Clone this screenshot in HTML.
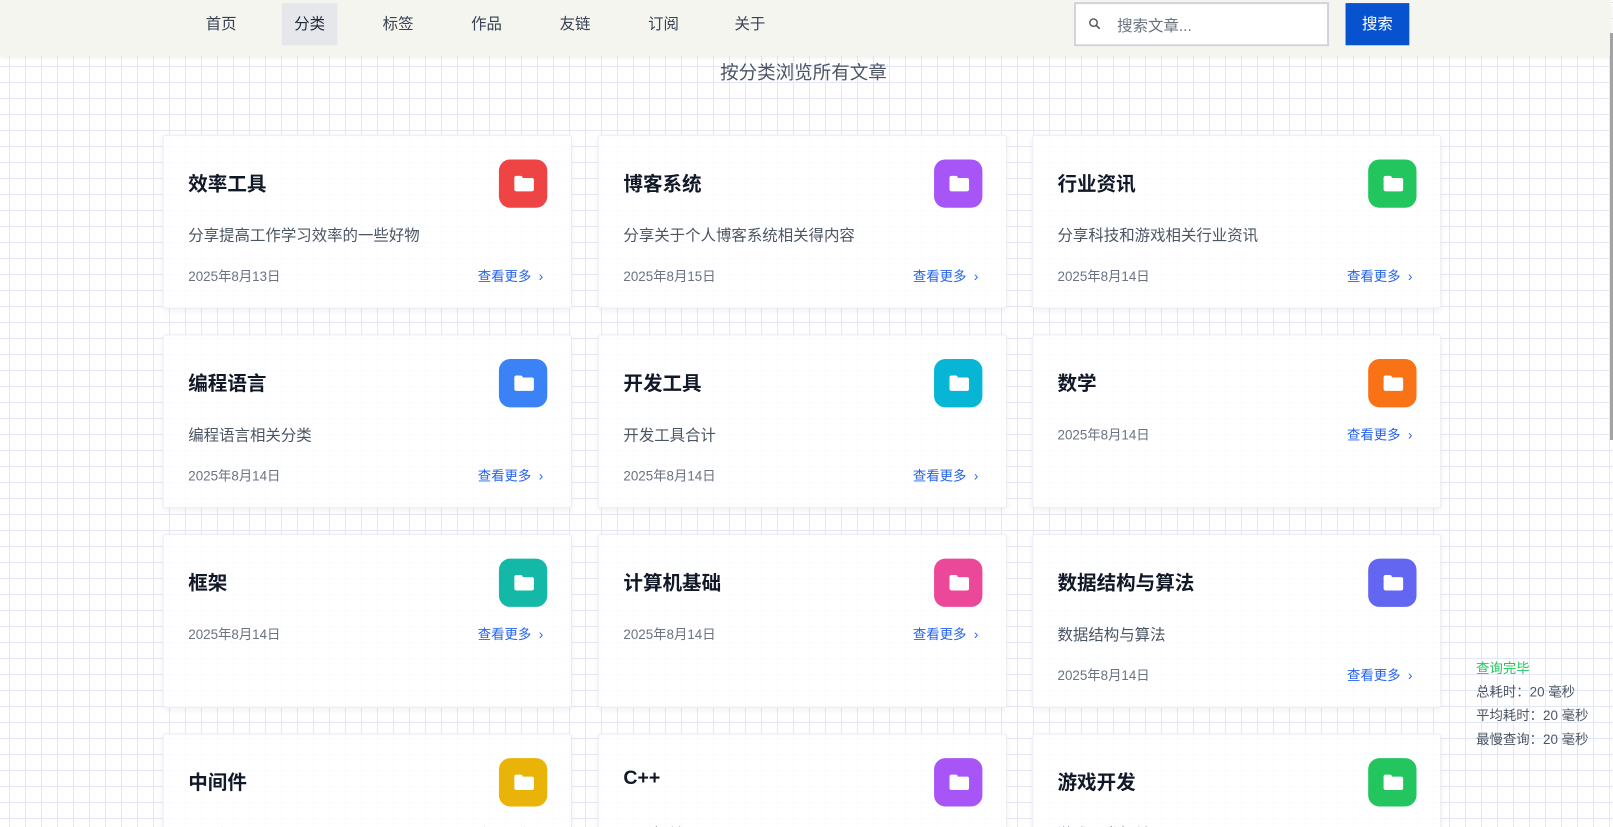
<!DOCTYPE html>
<html><head><meta charset="utf-8"><style>
*{box-sizing:border-box;margin:0;padding:0}
html,body{width:1613px;height:827px;overflow:hidden}
body{font-family:"Liberation Sans","Noto Sans CJK SC",sans-serif;background-color:#fff;
background-image:linear-gradient(#e3e6fb 1px,transparent 1px),linear-gradient(90deg,#e8e6f6 1px,transparent 1px);
background-size:16px 16px;background-position:0 2px,9px 0;position:relative}
.wrap{position:absolute;left:0;top:0;width:1568px;height:804px;overflow:hidden;transform:scale(1.0287);transform-origin:0 0}
.nav{position:absolute;left:0;top:0;width:1566px;height:54px;background:#f5f5f0;box-shadow:0 2px 4px rgba(0,0,0,.08);z-index:2}
.nav a{position:absolute;top:3px;height:41px;line-height:41px;font-size:15px;color:#374151;text-decoration:none;text-align:center;width:54px}
.nav a.on{background:#e5e7eb;color:#1f2937}
.search{position:absolute;left:1044px;top:2px;width:248px;height:43px;border:2px solid #d1d5db;background:#fff}
.search span{position:absolute;left:40px;top:10px;font-size:15px;color:#6b7280}
.btn{position:absolute;left:1308px;top:3px;width:62px;height:41px;background:#0652cf;color:#fff;font-size:15px;line-height:41px;text-align:center}
.sub{position:absolute;top:57px;left:0;width:1562px;text-align:center;font-size:18px;color:#4b5563}
.card{position:absolute;width:398px;height:169px;background:rgba(255,255,255,.85);border:1px solid #ececf2;border-radius:3px;box-shadow:0 2px 6px rgba(0,0,0,.06)}
.card h3{position:absolute;left:24px;top:32px;font-size:19px;font-weight:bold;color:#111827}
.ic{position:absolute;right:23px;top:23px;width:47px;height:47px;border-radius:11px}
.ic::before{content:"";position:absolute;left:15px;top:18px;width:19px;height:13px;background:#fff;border-radius:2px}
.ic::after{content:"";position:absolute;left:15px;top:16px;width:8px;height:4px;background:#fff;border-radius:2px 2px 0 0}
.d{position:absolute;left:24px;top:86px;font-size:15px;color:#4b5563}
.dt{position:absolute;left:24px;font-size:13px;color:#6b7280}
.m{position:absolute;right:27px;font-size:13px;color:#2563eb}
.stat{position:absolute;left:1435px;top:638px;font-size:13px;color:#4b5563;line-height:23px}
.sb{position:absolute;left:1610px;top:33px;width:3px;height:407px;background:#a3a3a3;z-index:5}
</style></head><body>
<div class="sb"></div>
<div class="wrap">
<div class="nav">
<a style="left:188px">首页</a><a class="on" style="left:274px">分类</a><a style="left:360px">标签</a><a style="left:446px">作品</a><a style="left:532px">友链</a><a style="left:618px">订阅</a><a style="left:702px">关于</a>
<div class="search"><svg style="position:absolute;left:12px;top:13px" width="13" height="13" viewBox="0 0 13 13"><circle cx="5" cy="5" r="3.6" fill="none" stroke="#555" stroke-width="1.4"/><path d="M7.7 7.7L11 11" stroke="#555" stroke-width="1.5"/></svg><span>搜索文章...</span></div>
<div class="btn">搜索</div>
</div>
<div class="sub">按分类浏览所有文章</div>

<div class="card" style="left:158px;top:131px"><h3>效率工具</h3><div class="ic" style="background:#ef4444"></div><div class="d">分享提高工作学习效率的一些好物</div><div class="dt" style="top:126px">2025年8月13日</div><div class="m" style="top:126px">查看更多 &nbsp;›</div></div>
<div class="card" style="left:581px;top:131px"><h3>博客系统</h3><div class="ic" style="background:#a855f7"></div><div class="d">分享关于个人博客系统相关得内容</div><div class="dt" style="top:126px">2025年8月15日</div><div class="m" style="top:126px">查看更多 &nbsp;›</div></div>
<div class="card" style="left:1003px;top:131px"><h3>行业资讯</h3><div class="ic" style="background:#22c55e"></div><div class="d">分享科技和游戏相关行业资讯</div><div class="dt" style="top:126px">2025年8月14日</div><div class="m" style="top:126px">查看更多 &nbsp;›</div></div>

<div class="card" style="left:158px;top:325px"><h3>编程语言</h3><div class="ic" style="background:#3b82f6"></div><div class="d">编程语言相关分类</div><div class="dt" style="top:126px">2025年8月14日</div><div class="m" style="top:126px">查看更多 &nbsp;›</div></div>
<div class="card" style="left:581px;top:325px"><h3>开发工具</h3><div class="ic" style="background:#06b6d4"></div><div class="d">开发工具合计</div><div class="dt" style="top:126px">2025年8月14日</div><div class="m" style="top:126px">查看更多 &nbsp;›</div></div>
<div class="card" style="left:1003px;top:325px"><h3>数学</h3><div class="ic" style="background:#f97316"></div><div class="dt" style="top:86px">2025年8月14日</div><div class="m" style="top:86px">查看更多 &nbsp;›</div></div>

<div class="card" style="left:158px;top:519px"><h3>框架</h3><div class="ic" style="background:#14b8a6"></div><div class="dt" style="top:86px">2025年8月14日</div><div class="m" style="top:86px">查看更多 &nbsp;›</div></div>
<div class="card" style="left:581px;top:519px"><h3>计算机基础</h3><div class="ic" style="background:#ec4899"></div><div class="dt" style="top:86px">2025年8月14日</div><div class="m" style="top:86px">查看更多 &nbsp;›</div></div>
<div class="card" style="left:1003px;top:519px"><h3>数据结构与算法</h3><div class="ic" style="background:#6366f1"></div><div class="d">数据结构与算法</div><div class="dt" style="top:126px">2025年8月14日</div><div class="m" style="top:126px">查看更多 &nbsp;›</div></div>

<div class="card" style="left:158px;top:713px"><h3>中间件</h3><div class="ic" style="background:#eab308"></div><div class="dt" style="top:86px">2025年8月14日</div><div class="m" style="top:86px">查看更多 &nbsp;›</div></div>
<div class="card" style="left:581px;top:713px"><h3>C++</h3><div class="ic" style="background:#a855f7"></div><div class="d">C++相关</div></div>
<div class="card" style="left:1003px;top:713px"><h3>游戏开发</h3><div class="ic" style="background:#22c55e"></div><div class="d">游戏开发相关</div></div>

<div class="stat"><div style="color:#22c55e">查询完毕</div><div>总耗时：20 毫秒</div><div>平均耗时：20 毫秒</div><div>最慢查询：20 毫秒</div></div>
</div>
</body></html>
